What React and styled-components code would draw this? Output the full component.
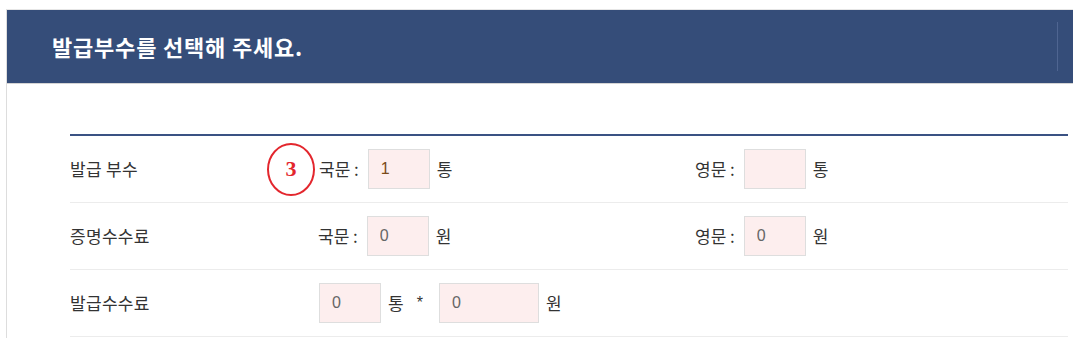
import React from 'react';
import styled, { createGlobalStyle } from 'styled-components';

const GlobalStyle = createGlobalStyle`
    body {
        margin: 0;
        background: #ffffff;
        font-family: "Noto Sans CJK KR", "Noto Sans", sans-serif;
        color: #333333;
    }
`;

export default function App() {
    return (
        <>
            <GlobalStyle />
            <Panel>
                <Header>
                    <Title>발급부수를 선택해 주세요.</Title>
                    <Divider />
                </Header>
                <Body>
                    <Table>
                        <colgroup>
                            <col style={{ width: 248 }} />
                            <col style={{ width: 377 }} />
                            <col />
                        </colgroup>
                        <tbody>
                            <Row>
                                <LabelCell>발급 부수</LabelCell>
                                <Cell>
                                    <Field $indent={1}>
                                        <Marker>3</Marker>
                                        <Caption>국문 :</Caption>
                                        <Input defaultValue="1" $dark />
                                        <Unit>통</Unit>
                                    </Field>
                                </Cell>
                                <Cell>
                                    <Field>
                                        <Caption>영문 :</Caption>
                                        <Input defaultValue="" />
                                        <Unit>통</Unit>
                                    </Field>
                                </Cell>
                            </Row>
                            <Row>
                                <LabelCell>증명수수료</LabelCell>
                                <Cell>
                                    <Field>
                                        <Caption>국문 :</Caption>
                                        <Input defaultValue="0" />
                                        <Unit>원</Unit>
                                    </Field>
                                </Cell>
                                <Cell>
                                    <Field>
                                        <Caption>영문 :</Caption>
                                        <Input defaultValue="0" />
                                        <Unit>원</Unit>
                                    </Field>
                                </Cell>
                            </Row>
                            <Row>
                                <LabelCell>발급수수료</LabelCell>
                                <Cell colSpan={2}>
                                    <Field $indent={1}>
                                        <Input defaultValue="0" />
                                        <Unit>통</Unit>
                                        <Times>*</Times>
                                        <Input defaultValue="0" $wide />
                                        <Unit>원</Unit>
                                    </Field>
                                </Cell>
                            </Row>
                        </tbody>
                    </Table>
                </Body>
            </Panel>
        </>
    );
}

const Panel = styled.div`
    margin: 9px 0 0 6px;
    border-left: 1px solid #dddddd;
    border-top: 1px solid #e6e6e6;
    min-height: 329px;
    box-sizing: border-box;
`;

const Header = styled.div`
    height: 73px;
    background-color: #354d79;
    border-bottom: 1px solid #d4d4d4;
    display: flex;
    align-items: center;
    justify-content: space-between;
    padding-left: 45px;
`;

const Title = styled.h2`
    margin: 0 0 2px;
    color: #ffffff;
    font-size: 22px;
    font-weight: 700;
    letter-spacing: 0.8px;
`;

const Divider = styled.div`
    width: 1px;
    height: 49px;
    margin-right: 15px;
    background-color: #4f6591;
`;

const Body = styled.div`
    padding: 50px 4px 0 63px;
`;

const Table = styled.table`
    width: 998px;
    table-layout: fixed;
    border-collapse: collapse;
    border-top: 2px solid #3a5283;
`;

const Row = styled.tr`
    height: 67px;
    border-bottom: 1px solid #ececec;
`;

const LabelCell = styled.td`
    padding: 0;
    font-size: 17px;
    letter-spacing: 0.3px;
    color: #333333;
    vertical-align: middle;
`;

const Cell = styled.td`
    padding: 0;
    vertical-align: middle;
`;

const Field = styled.div`
    position: relative;
    display: flex;
    align-items: center;
    padding-left: ${(p) => p.$indent || 0}px;
    font-size: 17px;
    color: #333333;
`;

const Marker = styled.span`
    position: absolute;
    left: -51px;
    top: 50%;
    box-sizing: border-box;
    width: 48px;
    height: 53px;
    margin-top: -26px;
    border: 2px solid #e3262d;
    border-radius: 50%;
    display: flex;
    align-items: center;
    justify-content: center;
    color: #e3262d;
    font-family: "Liberation Serif", serif;
    font-weight: 700;
    font-size: 22px;
`;

const Caption = styled.span`
    margin-right: 9px;
`;

const Input = styled.input`
    box-sizing: border-box;
    width: ${(p) => (p.$wide ? '100px' : '62px')};
    height: 40px;
    margin: 0;
    padding: 0 0 0 12px;
    border: 1px solid #dedede;
    background-color: #fdeeee;
    font-family: "Liberation Sans", Arial, sans-serif;
    font-size: 16px;
    color: ${(p) => (p.$dark ? '#7a4a1a' : '#666666')};
    outline: none;
`;

const Unit = styled.span`
    margin-left: 7px;
`;

const Times = styled.span`
    margin: 0 16px 0 13px;
    font-family: "Liberation Sans", Arial, sans-serif;
    font-size: 16px;
`;
